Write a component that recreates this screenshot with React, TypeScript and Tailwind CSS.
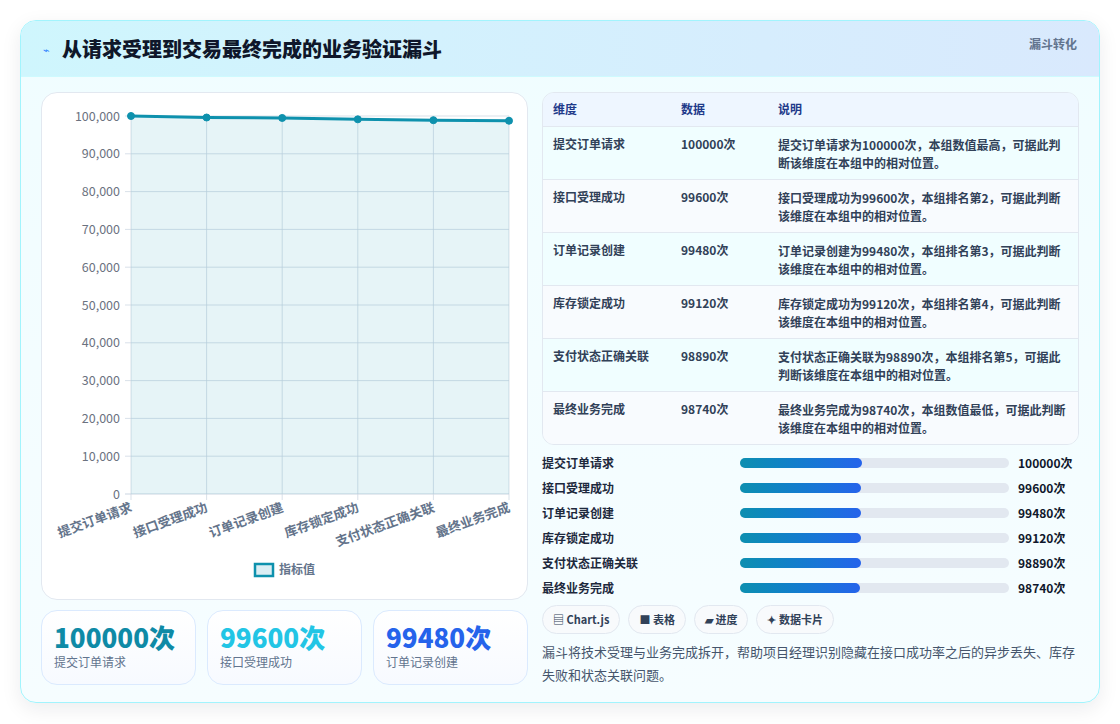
const rows = [
  { name: "提交订单请求", v: 100000, desc: "提交订单请求为100000次，本组数值最高，可据此判断该维度在本组中的相对位置。" },
  { name: "接口受理成功", v: 99600, desc: "接口受理成功为99600次，本组排名第2，可据此判断该维度在本组中的相对位置。" },
  { name: "订单记录创建", v: 99480, desc: "订单记录创建为99480次，本组排名第3，可据此判断该维度在本组中的相对位置。" },
  { name: "库存锁定成功", v: 99120, desc: "库存锁定成功为99120次，本组排名第4，可据此判断该维度在本组中的相对位置。" },
  { name: "支付状态正确关联", v: 98890, desc: "支付状态正确关联为98890次，本组排名第5，可据此判断该维度在本组中的相对位置。" },
  { name: "最终业务完成", v: 98740, desc: "最终业务完成为98740次，本组数值最低，可据此判断该维度在本组中的相对位置。" },
];

const font = { fontFamily: '"Noto Sans CJK SC", "Noto Sans", sans-serif' };

const Chart = () => {
  const x0 = 89, x1 = 467, y0 = 401, y1 = 23;
  const step = (x1 - x0) / 5;
  const py = (v: number) => y0 - ((y0 - y1) * v) / 100000;
  const pts = rows.map((r, i) => `${x0 + i * step},${py(r.v)}`).join(" ");
  return (
    <svg width="487" height="506" className="block">
      {Array.from({ length: 11 }).map((_, i) => {
        const y = y0 - i * 37.8;
        return (
          <g key={i}>
            <line x1={x0 - 6} x2={x1} y1={y} y2={y} stroke="#cbd5e1" strokeWidth="1" opacity={i === 0 ? 1 : 0.7} />
            <text x={78} y={y + 4.5} textAnchor="end" fontSize="12.5" fill="#6b7280" style={font}>
              {(i * 10000).toLocaleString("en-US")}
            </text>
          </g>
        );
      })}
      {rows.map((_, i) => (
        <line key={i} x1={x0 + i * step} x2={x0 + i * step} y1={y1} y2={y0 + 6} stroke="#cbd5e1" strokeWidth="1" opacity="0.7" />
      ))}
      <polygon points={`${x0},${y0} ${pts} ${x1},${y0}`} fill="#0e91ad" fillOpacity="0.1" />
      <polyline points={pts} fill="none" stroke="#0e91ad" strokeWidth="3" />
      {rows.map((r, i) => (
        <circle key={i} cx={x0 + i * step} cy={py(r.v)} r="3.5" fill="#0e91ad" stroke="#0e91ad" />
      ))}
      {rows.map((r, i) => (
        <text
          key={i}
          x={x0 + i * step + 2}
          y={418}
          textAnchor="end"
          fontSize="13"
          fontWeight="600"
          fill="#64748b"
          transform={`rotate(-20 ${x0 + i * step + 2} 418)`}
          style={font}
        >
          {r.name}
        </text>
      ))}
      <rect x="213" y="471" width="18" height="12" fill="#dbeef4" stroke="#0e91ad" strokeWidth="2.5" />
      <text x="237" y="481" fontSize="12" fill="#64748b" fontWeight="600" style={font}>指标值</text>
    </svg>
  );
};

export default function App() {
  return (
    <div className="min-h-screen bg-white p-5" style={font}>
      <div className="h-[683px] rounded-2xl border border-cyan-200 bg-gradient-to-b from-[#f0fdff] to-[#f6fdff] shadow-[0_6px_20px_rgba(15,23,42,0.08)] overflow-hidden">
        <div className="flex h-[56px] items-start justify-between bg-gradient-to-r from-[#cff6fd] to-[#d9e9fd] px-[22px] border-b border-cyan-100">
          <div className="flex items-center gap-3 pt-[13px]">
            <span className="text-[11px] text-blue-500">⌁</span>
            <h1 className="text-[20px] font-extrabold text-[#0f172a]">从请求受理到交易最终完成的业务验证漏斗</h1>
          </div>
          <span className="pt-[15px] text-xs font-semibold text-slate-500">漏斗转化</span>
        </div>
        <div className="flex gap-[14px] px-5 pt-[15px]">
          <div className="w-[487px] shrink-0">
            <div className="rounded-2xl border border-slate-200 bg-white">
              <Chart />
            </div>
            <div className="mt-[10px] grid grid-cols-3 gap-[11px]">
              {[
                { v: "100000次", n: "提交订单请求", c: "text-[#0e8aa6]" },
                { v: "99600次", n: "接口受理成功", c: "text-[#22c5e5]" },
                { v: "99480次", n: "订单记录创建", c: "text-[#2563eb]" },
              ].map((s) => (
                <div key={s.n} className="h-[75px] rounded-2xl border border-blue-100 bg-gradient-to-b from-white to-[#f7faff] px-[12px] pt-[9px]">
                  <div className={`text-[26px] font-extrabold leading-[34px] ${s.c}`}>{s.v}</div>
                  <div className="text-xs text-slate-500">{s.n}</div>
                </div>
              ))}
            </div>
          </div>
          <div className="flex-1 w-[540px]">
            <div className="overflow-hidden rounded-xl border border-slate-200">
              <table className="w-full text-xs font-semibold text-slate-700">
                <thead className="bg-[#eef6ff] text-[#1e3a8a]">
                  <tr className="h-[33px] border-b border-slate-200 text-left">
                    <th className="w-[138px] pl-[10px] font-semibold">维度</th>
                    <th className="w-[97px] font-semibold">数据</th>
                    <th className="font-semibold">说明</th>
                  </tr>
                </thead>
                <tbody>
                  {rows.map((r, i) => (
                    <tr key={r.name} className={`h-[53px] border-b border-slate-200 last:border-b-0 align-top ${i % 2 ? "bg-[#f8fbfe]" : "bg-[#f0feff]"}`}>
                      <td className="pl-[10px] pt-[9px]">{r.name}</td>
                      <td className="pt-[9px]">{r.v}次</td>
                      <td className="pr-2 pt-[9px] leading-[18px]">{r.desc}</td>
                    </tr>
                  ))}
                </tbody>
              </table>
            </div>
            <div className="mt-[9px] flex flex-col gap-[7px]">
              {rows.map((r) => (
                <div key={r.name} className="flex h-[18px] items-center text-xs font-semibold text-slate-800">
                  <span className="w-[198px]">{r.name}</span>
                  <div className="h-[10px] w-[269px] rounded-full bg-slate-200">
                    <div className="h-full rounded-full bg-gradient-to-r from-[#0e8fb0] to-[#2563eb]" style={{ width: `${45.3 * (r.v / 100000)}%` }} />
                  </div>
                  <span className="ml-[9px] font-bold text-slate-900">{r.v}次</span>
                </div>
              ))}
            </div>
            <div className="mt-[8px] flex gap-[8px]">
              {["▤ Chart.js", "■ 表格", "▰ 进度", "✦ 数据卡片"].map((c) => (
                <span key={c} className="rounded-full border border-slate-200 bg-slate-50 px-[10px] py-[5px] text-[11px] font-semibold text-slate-700">{c}</span>
              ))}
            </div>
            <p className="mt-[6px] text-[13px] leading-[23px] text-slate-600">
              漏斗将技术受理与业务完成拆开，帮助项目经理识别隐藏在接口成功率之后的异步丢失、库存失败和状态关联问题。
            </p>
          </div>
        </div>
      </div>
    </div>
  );
}
